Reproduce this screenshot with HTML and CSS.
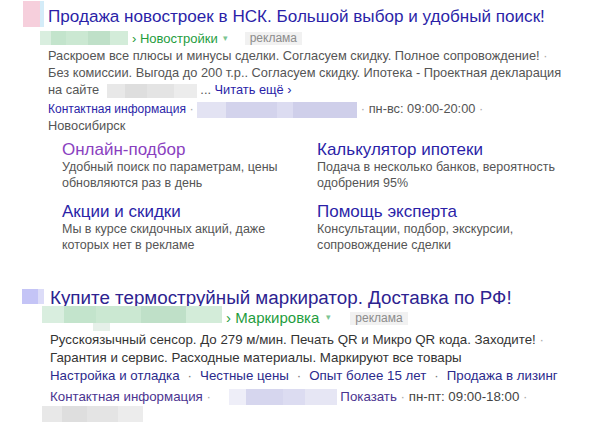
FILE: index.html
```html
<!DOCTYPE html>
<html lang="ru">
<head>
<meta charset="utf-8">
<link rel="stylesheet" href="styles.css">
</head>
<body>
<div class="page">
  <section class="ad ad1">
    <div class="title-row">
      <span class="fav fav1"><span class="fav1-a"></span><span class="fav1-b"></span></span>
      <a class="title">Продажа новостроек в НСК. Большой выбор и удобный поиск!</a>
    </div>
    <div class="url-row">
      <span class="blur blur-green g1"></span>
      <span class="crumb">› Новостройки</span><span class="caret">▾</span>
      <span class="badge">реклама</span>
    </div>
    <div class="desc desc1">
      <div>Раскроем все плюсы и минусы сделки. Согласуем скидку. Полное сопровождение! <span class="sep">·</span></div>
      <div>Без комиссии. Выгода до 200 т.р.. Согласуем скидку. Ипотека - Проектная декларация</div>
      <div class="line-site">на сайте <span class="blur blur-gray s1"></span> ... <a class="more">Читать ещё ›</a></div>
    </div>
    <div class="contact contact1">
      <a class="contact-link">Контактная информация</a>
      <span class="sep">·</span>
      <span class="blur blur-purple p1"></span>
      <span class="sep">·</span>
      <span>пн-вс: 09:00-20:00</span>
      <span class="sep">·</span>
    </div>
    <div class="city">Новосибирск</div>
    <div class="sitelinks">
      <div class="sl">
        <a class="sl-title visited">Онлайн-подбор</a>
        <p class="sl-desc">Удобный поиск по параметрам, цены обновляются раз в день</p>
      </div>
      <div class="sl">
        <a class="sl-title">Калькулятор ипотеки</a>
        <p class="sl-desc">Подача в несколько банков, вероятность одобрения 95%</p>
      </div>
      <div class="sl">
        <a class="sl-title">Акции и скидки</a>
        <p class="sl-desc">Мы в курсе скидочных акций, даже которых нет в рекламе</p>
      </div>
      <div class="sl">
        <a class="sl-title">Помощь эксперта</a>
        <p class="sl-desc">Консультации, подбор, экскурсии, сопровождение сделки</p>
      </div>
    </div>
  </section>

  <section class="ad ad2">
    <div class="title-row title-row2">
      <span class="fav fav2"></span>
      <a class="title title2">Купите термоструйный маркиратор. Доставка по РФ!</a>
    </div>
    <div class="url-row url-row2">
      <span class="blur blur-green g2"></span>
      <span class="crumb">› Маркировка</span><span class="caret">▾</span>
      <span class="badge badge2">реклама</span>
    </div>
    <div class="desc desc2">
      <div>Русскоязычный сенсор. До 279 м/мин. Печать QR и Микро QR кода. Заходите! <span class="sep">·</span></div>
      <div>Гарантия и сервис. Расходные материалы. Маркируют все товары</div>
    </div>
    <div class="links-row">
      <a>Настройка и отладка</a><span class="dot">·</span><a>Честные цены</a><span class="dot">·</span><a>Опыт более 15 лет</a><span class="dot">·</span><a>Продажа в лизинг</a>
    </div>
    <div class="contact contact2">
      <a class="contact-link">Контактная информация</a>
      <span class="sep">·</span>
      <span class="blur blur-purple p2"></span>
      <a class="show">Показать</a>
      <span class="sep">·</span>
      <span>пн-пт: 09:00-18:00</span>
      <span class="sep">·</span>
    </div>
    <div class="blur blur-gray tail"></div>
  </section>
</div>
</body>
</html>
```

FILE: styles.css
```css
* { box-sizing: border-box; }
html, body { margin: 0; padding: 0; background: #fff; }
body {
  font-family: "Liberation Sans", Arial, sans-serif;
  color: #555;
  width: 592px;
  height: 423px;
  overflow: hidden;
}
a { text-decoration: none; cursor: pointer; }

.ad { padding-left: 48px; }
.ad1 { padding-top: 6px; }
.ad2 { padding-top: 34px; padding-left: 50px; }

.title-row {
  display: flex;
  align-items: flex-start;
  margin-left: -26px;
}
.title-row2 { margin-left: -28px; }
.fav { flex: none; display: flex; }
.fav1 { width: 21px; height: 26px; margin-top: -5px; margin-right: 4px; margin-left: 1px; }
.fav1-a { width: 17px; background: #f6cfdc; }
.fav1-b { width: 4px; background: #d4ecf8; }
.fav2 {
  width: 22px; height: 15px; margin-top: 2px; margin-right: 6px;
  background: linear-gradient(90deg, #c4c4f6 0 72%, #dcdcf8 72% 100%);
}
.title {
  font-size: 17.1px;
  line-height: 22px;
  color: #2b1fa8;
  white-space: nowrap;
}
.title2 { font-size: 18.8px; color: #2d2390; }

.url-row {
  display: flex;
  align-items: center;
  margin-left: -8px;
  height: 16px;
  margin-top: 2px;
  font-size: 13px;
  white-space: nowrap;
}
.blur { display: inline-block; vertical-align: middle; }
.blur-green {
  background: linear-gradient(90deg, #d9eedf 0 12%, #c3e4cc 12% 30%, #cbe8d2 30% 55%, #bfe0c8 55% 80%, #d3ecd9 80% 100%);
}
.g1 { width: 88px; height: 14px; }
.crumb { color: #1f9d3e; margin-left: 4px; white-space: nowrap; }
.caret { color: #7cc592; font-size: 9px; margin-left: 5px; }
.badge {
  color: #8c8c8c;
  background: #f1f1f1;
  font-size: 12px;
  line-height: 13px;
  padding: 0 5px;
  margin-left: 17px;
}

.desc { font-size: 12.8px; line-height: 17px; color: #555; }
.desc1 { margin-top: 1px; }
.sep { color: #aaa; }
.blur-gray {
  background: linear-gradient(90deg, #e8e8e8 0 20%, #dedede 20% 45%, #e4e4e4 45% 75%, #ececec 75% 100%);
}
.s1 { width: 90px; height: 14px; margin-left: 4px; }
.more { color: #2b1fa8; }

.contact { font-size: 12.8px; line-height: 16px; color: #555; white-space: nowrap; }
.contact1 { margin-top: 3px; }
.contact1 .contact-link { font-size: 12px; }
.contact-link { color: #2b1fa8; }
.blur-purple {
  background: linear-gradient(90deg, #e3e3f3 0 18%, #d3d3ec 18% 50%, #dcdcf1 50% 60%, #cfcfea 60% 100%);
}
.p1 { width: 160px; height: 16px; }
.city { font-size: 12.8px; line-height: 16px; color: #555; }

.sitelinks {
  display: grid;
  grid-template-columns: 255px 255px;
  row-gap: 12px;
  margin-left: 14px;
  margin-top: 7px;
}
.sl-title {
  display: block;
  font-size: 17px;
  line-height: 18px;
  color: #2b1fa8;
}
.sl-title.visited { color: #8a3fc0; }
.sl-desc {
  margin: 0;
  font-size: 12.5px;
  line-height: 16px;
  color: #555;
  width: 240px;
}

.url-row2 {
  height: 19px;
  margin-left: -8px;
  margin-top: -3px;
  align-items: flex-end;
  font-size: 15px;
}
.url-row2 .crumb, .url-row2 .caret { line-height: 15px; }
.url-row2 .caret { margin-left: 7px; }
.g2 { position: relative; width: 180px; height: 17px; align-self: flex-start; }
.g2::after {
  content: "";
  position: absolute;
  left: 51px;
  top: 17px;
  width: 17px;
  height: 8px;
  background: #e6f0e9;
}
.badge2 { margin-left: 19px; font-size: 12px; padding: 0 5px; }

.desc2 { font-size: 13.3px; line-height: 18px; color: #333; margin-top: 6px; }
.links-row {
  font-size: 13.3px; line-height: 18px; white-space: nowrap;
}
.links-row a { color: #2b2a8c; }
.dot { color: #777; margin: 0 8px; }
.contact2 { font-size: 13.3px; line-height: 20px; margin-top: 2px; color: #444; }
.contact2 .contact-link { color: #4b3490; }
.p2 {
  width: 108px; height: 16px; margin-left: 14px;
  background: linear-gradient(90deg, #eeeef8 0 16%, #d6d6ee 16% 50%, #dcdcf1 50% 70%, #e6e6f4 70% 100%);
}
.show { color: #4b3490; }
.tail { display: block; width: 101px; height: 16px; margin-left: -8px; margin-top: -1px; }
```
